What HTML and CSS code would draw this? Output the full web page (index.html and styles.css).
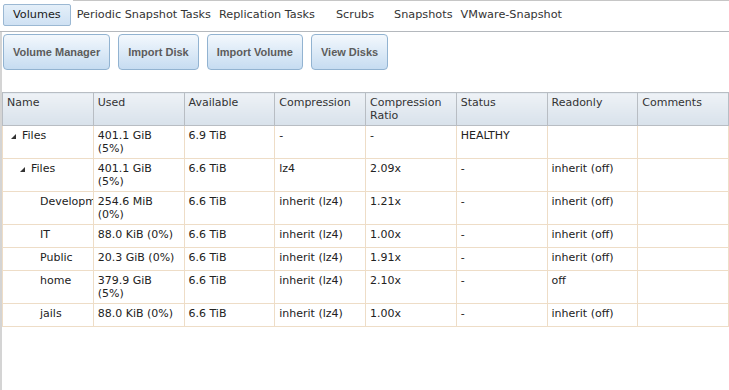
FILE: index.html
```html
<!DOCTYPE html>
<html>
<head>
    <link rel="stylesheet" href="styles.css">
</head>
<body>
    <div class="tabs">
        <div class="tab active">Volumes</div>
        <div class="tab-strip">
            <div class="tab">Periodic Snapshot Tasks</div>
            <div class="tab">Replication Tasks</div>
            <div class="tab spaced">Scrubs</div>
            <div class="tab">Snapshots</div>
            <div class="tab">VMware-Snapshot</div>
        </div>
    </div>

    <div class="panel">
        <div class="toolbar">
            <button>Volume Manager</button>
            <button>Import Disk</button>
            <button>Import Volume</button>
            <button>View Disks</button>
        </div>

        <table class="grid">
            <thead>
                <tr>
                    <th>Name</th>
                    <th>Used</th>
                    <th>Available</th>
                    <th>Compression</th>
                    <th>Compression Ratio</th>
                    <th>Status</th>
                    <th>Readonly</th>
                    <th>Comments</th>
                </tr>
            </thead>
            <tbody>
                <tr>
                    <td class="name lvl0"><span class="expander"><svg width="5" height="5" viewBox="0 0 5 5"><polygon points="0,5 5,0 5,5"/></svg></span>Files</td>
                    <td>401.1 GiB (5%)</td>
                    <td>6.9 TiB</td>
                    <td>-</td>
                    <td>-</td>
                    <td>HEALTHY</td>
                    <td></td>
                    <td></td>
                </tr>
                <tr>
                    <td class="name lvl1"><span class="expander"><svg width="5" height="5" viewBox="0 0 5 5"><polygon points="0,5 5,0 5,5"/></svg></span>Files</td>
                    <td>401.1 GiB (5%)</td>
                    <td>6.6 TiB</td>
                    <td>lz4</td>
                    <td>2.09x</td>
                    <td>-</td>
                    <td>inherit (off)</td>
                    <td></td>
                </tr>
                <tr>
                    <td class="name lvl2">Development</td>
                    <td>254.6 MiB (0%)</td>
                    <td>6.6 TiB</td>
                    <td>inherit (lz4)</td>
                    <td>1.21x</td>
                    <td>-</td>
                    <td>inherit (off)</td>
                    <td></td>
                </tr>
                <tr>
                    <td class="name lvl2">IT</td>
                    <td>88.0 KiB (0%)</td>
                    <td>6.6 TiB</td>
                    <td>inherit (lz4)</td>
                    <td>1.00x</td>
                    <td>-</td>
                    <td>inherit (off)</td>
                    <td></td>
                </tr>
                <tr>
                    <td class="name lvl2">Public</td>
                    <td>20.3 GiB (0%)</td>
                    <td>6.6 TiB</td>
                    <td>inherit (lz4)</td>
                    <td>1.91x</td>
                    <td>-</td>
                    <td>inherit (off)</td>
                    <td></td>
                </tr>
                <tr>
                    <td class="name lvl2">home</td>
                    <td>379.9 GiB (5%)</td>
                    <td>6.6 TiB</td>
                    <td>inherit (lz4)</td>
                    <td>2.10x</td>
                    <td>-</td>
                    <td>off</td>
                    <td></td>
                </tr>
                <tr>
                    <td class="name lvl2">jails</td>
                    <td>88.0 KiB (0%)</td>
                    <td>6.6 TiB</td>
                    <td>inherit (lz4)</td>
                    <td>1.00x</td>
                    <td>-</td>
                    <td>inherit (off)</td>
                    <td></td>
                </tr>
            </tbody>
        </table>
    </div>
</body>
</html>
```

FILE: styles.css
```css
body {
    margin: 0;
    font-family: "DejaVu Sans", Verdana, sans-serif;
    font-size: 11px;
    color: #222;
    background: white;
}
.tabs {
    display: flex;
    height: 31px;
    border-bottom: 1px solid #b4b8bd;
}
.tab {
    padding: 0 4px;
    margin-top: 3px;
    font-size: 11.25px;
    line-height: 22px;
    color: #333;
    white-space: nowrap;
}
.tab.active {
    margin: 4px 2px 0 3px;
    padding: 0 9px;
    height: 20px;
    line-height: 20px;
    color: #1a1a1a;
    background: linear-gradient(#e4eff9, #cfe1f3);
    border: 1px solid #9bb8d3;
    border-radius: 2px;
}
.tab.spaced {
    margin-left: 13px;
    margin-right: 12px;
}
.tab-strip {
    flex: 1;
    display: flex;
    align-items: flex-start;
    border-top: 1px solid #c6c6c6;
}
.panel {
    border-left: 2px solid #d4d4d4;
    min-height: 358px;
}
.toolbar {
    display: flex;
    gap: 8px;
    padding: 2px 0 0 1px;
    margin-bottom: 22px;
}
button {
    height: 36px;
    padding: 0 9px;
    font-family: "Liberation Sans", Arial, sans-serif;
    font-size: 11px;
    font-weight: bold;
    color: #5c5c5c;
    background: linear-gradient(#f3f8fd, #c6dcf1);
    border: 1px solid #92b3d1;
    border-radius: 4px;
    cursor: pointer;
}
.grid {
    width: 727px;
    table-layout: fixed;
    border-collapse: collapse;
}
.grid th {
    padding: 3px 4px;
    line-height: 13px;
    text-align: left;
    vertical-align: top;
    font-weight: normal;
    color: #333;
    background: linear-gradient(#eef2f6, #d8e2eb);
    border: 1px solid #b8bdc3;
}
.grid td {
    height: 16px;
    padding: 3px 4px;
    line-height: 13px;
    vertical-align: top;
    border: 1px solid #eeddc7;
}
.grid td.name {
    white-space: nowrap;
    overflow: hidden;
}
.expander {
    display: inline-block;
    width: 5px;
    margin-right: 6px;
}
.expander svg {
    display: block;
    fill: #333;
}
.lvl0 {
    padding-left: 8px !important;
}
.lvl1 {
    padding-left: 17px !important;
}
.lvl2 {
    padding-left: 37px !important;
}
```
